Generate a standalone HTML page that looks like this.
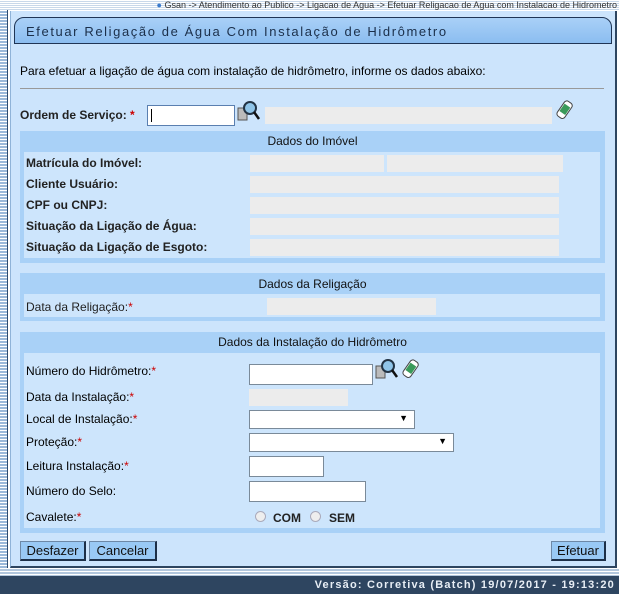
<!DOCTYPE html>
<html><head><meta charset="utf-8"><style>
*{box-sizing:border-box;margin:0;padding:0}
body{width:619px;height:594px;overflow:hidden;background:#fff;font-family:"Liberation Sans",Arial,sans-serif;font-size:12px;color:#000;position:relative}
.abs{position:absolute}
.crumb{top:0;left:0;width:619px;height:10px;background:repeating-linear-gradient(#fff 0 1px,#c8d8ea 1px 2px);font-size:9px;color:#333;text-align:right;line-height:10px;white-space:nowrap;padding-right:2px}
.strip{left:0;top:10px;width:8px;height:566px;background:repeating-linear-gradient(#fff 0 1px,#9bb9da 1px 3px);border-right:1px solid #2d4a6e}
.panel{left:10px;top:11px;width:607px;height:557px;background:#cce4fc;border-right:2px solid #2d4560;border-bottom:2px solid #2d4560;border-left:1px solid #8fb3d8}
.title{left:14px;top:17px;width:598px;height:27px;border:1px solid #1f3555;border-radius:10px 10px 0 0;background:linear-gradient(#a9d0f7,#8bbdf0);font-size:13px;letter-spacing:1.6px;color:#1b2f4a;padding:6px 0 0 11px}
.lbl{font-weight:bold;color:#222}
.req{color:#c00}
.inp{background:#fff;border:1px solid #7a8a99}
.ro{background:#ececec}
.sec{background:#a9d1f7}
.sech{text-align:center;color:#111}
.inner{background:#cde5fc}
.btn{background:#99c9f5;border:1px solid #6d88a6;border-right:2px solid #1c2f48;border-bottom:2px solid #1c2f48;font-size:13px;text-align:center;line-height:17px;color:#111}
.foot{left:0;top:576px;width:619px;height:18px;background:#2e4560;color:#e8eef5;font-size:11px;font-weight:bold;letter-spacing:1.2px;text-align:right;padding-right:4px;line-height:18px}
.stripe2{left:0;top:568px;width:619px;height:8px;background:repeating-linear-gradient(#fff 0 1px,#b3c7dd 1px 3px)}
.sel:after{content:"▼";position:absolute;right:6px;top:2px;font-size:9px}
.radio{width:11px;height:11px;border-radius:50%;border:1px solid #aab;background:#eee}
</style></head><body>
<div class="abs crumb"><span style="color:#3a7acc">●</span> Gsan -&gt; Atendimento ao Publico -&gt; Ligacao de Agua -&gt; Efetuar Religacao de Agua com Instalacao de Hidrometro</div>
<div class="abs strip"></div>
<div class="abs panel"></div>
<div class="abs title">Efetuar Religação de Água Com Instalação de Hidrômetro</div>
<div class="abs" style="left:20px;top:64px">Para efetuar a ligação de água com instalação de hidrômetro, informe os dados abaixo:</div>
<div class="abs" style="left:20px;top:88px;width:584px;height:1px;background:#999"></div>
<div class="abs lbl" style="left:20px;top:108px">Ordem de Serviço: <span class="req">*</span></div>
<div class="abs inp" style="left:147px;top:105px;width:88px;height:21px;border:1px solid #5a7fb0"><div style="width:1px;height:13px;background:#000;margin:3px 0 0 3px"></div></div>
<svg class="abs" style="left:237px;top:100px" width="24" height="22"><rect x="1" y="8" width="9" height="12" fill="#bbb" stroke="#555"/><circle cx="13" cy="8" r="6" fill="#8fc4e8" stroke="#234" stroke-width="2"/><line x1="17" y1="12" x2="22" y2="19" stroke="#111" stroke-width="2.5"/></svg>
<div class="abs ro" style="left:265px;top:107px;width:287px;height:17px"></div>
<svg class="abs" style="left:556px;top:99px" width="18" height="22"><g transform="rotate(35 9 11)"><rect x="4" y="2" width="9" height="18" rx="3" fill="#fff" stroke="#444"/><rect x="5" y="6" width="7" height="9" fill="#3a9a5a"/></g></svg>

<div class="abs sec" style="left:20px;top:131px;width:585px;height:132px"></div>
<div class="abs sech" style="left:20px;top:134px;width:585px">Dados do Imóvel</div>
<div class="abs inner" style="left:24px;top:152px;width:576px;height:106px"></div>
<div class="abs lbl" style="left:26px;top:156px">Matrícula do Imóvel:</div>
<div class="abs lbl" style="left:26px;top:177px">Cliente Usuário:</div>
<div class="abs lbl" style="left:26px;top:198px">CPF ou CNPJ:</div>
<div class="abs lbl" style="left:26px;top:219px">Situação da Ligação de Água:</div>
<div class="abs lbl" style="left:26px;top:240px">Situação da Ligação de Esgoto:</div>
<div class="abs ro" style="left:250px;top:155px;width:134px;height:17px"></div>
<div class="abs ro" style="left:387px;top:155px;width:176px;height:17px"></div>
<div class="abs ro" style="left:250px;top:176px;width:309px;height:17px"></div>
<div class="abs ro" style="left:250px;top:197px;width:309px;height:17px"></div>
<div class="abs ro" style="left:250px;top:218px;width:309px;height:17px"></div>
<div class="abs ro" style="left:250px;top:239px;width:309px;height:17px"></div>

<div class="abs sec" style="left:20px;top:273px;width:585px;height:48px"></div>
<div class="abs sech" style="left:20px;top:277px;width:585px">Dados da Religação</div>
<div class="abs inner" style="left:24px;top:294px;width:576px;height:23px"></div>
<div class="abs lbl" style="left:26px;top:300px;font-weight:normal">Data da Religação:<span class="req">*</span></div>
<div class="abs ro" style="left:267px;top:298px;width:169px;height:17px"></div>

<div class="abs sec" style="left:20px;top:332px;width:585px;height:201px"></div>
<div class="abs sech" style="left:20px;top:335px;width:585px">Dados da Instalação do Hidrômetro</div>
<div class="abs inner" style="left:24px;top:353px;width:576px;height:175px"></div>
<div class="abs" style="left:26px;top:364px">Número do Hidrômetro:<span class="req">*</span></div>
<div class="abs" style="left:26px;top:390px">Data da Instalação:<span class="req">*</span></div>
<div class="abs" style="left:26px;top:412px">Local de Instalação:<span class="req">*</span></div>
<div class="abs" style="left:26px;top:435px">Proteção:<span class="req">*</span></div>
<div class="abs" style="left:26px;top:459px">Leitura Instalação:<span class="req">*</span></div>
<div class="abs" style="left:26px;top:484px">Número do Selo:</div>
<div class="abs" style="left:26px;top:510px">Cavalete:<span class="req">*</span></div>
<div class="abs inp" style="left:249px;top:364px;width:124px;height:21px"></div>
<svg class="abs" style="left:375px;top:358px" width="24" height="22"><rect x="1" y="8" width="9" height="12" fill="#bbb" stroke="#555"/><circle cx="13" cy="8" r="6" fill="#8fc4e8" stroke="#234" stroke-width="2"/><line x1="17" y1="12" x2="22" y2="19" stroke="#111" stroke-width="2.5"/></svg>
<svg class="abs" style="left:402px;top:358px" width="18" height="22"><g transform="rotate(35 9 11)"><rect x="4" y="2" width="9" height="18" rx="3" fill="#fff" stroke="#444"/><rect x="5" y="6" width="7" height="9" fill="#3a9a5a"/></g></svg>
<div class="abs ro" style="left:249px;top:389px;width:99px;height:17px"></div>
<div class="abs inp sel" style="left:249px;top:410px;width:166px;height:19px"></div>
<div class="abs inp sel" style="left:249px;top:433px;width:205px;height:19px"></div>
<div class="abs inp" style="left:249px;top:456px;width:75px;height:21px"></div>
<div class="abs inp" style="left:249px;top:481px;width:117px;height:21px"></div>
<div class="abs radio" style="left:255px;top:511px"></div>
<div class="abs lbl" style="left:273px;top:511px">COM</div>
<div class="abs radio" style="left:310px;top:511px"></div>
<div class="abs lbl" style="left:329px;top:511px">SEM</div>

<div class="abs btn" style="left:20px;top:541px;width:66px;height:20px">Desfazer</div>
<div class="abs btn" style="left:89px;top:541px;width:68px;height:20px">Cancelar</div>
<div class="abs btn" style="left:551px;top:541px;width:55px;height:20px">Efetuar</div>

<div class="abs stripe2"></div>
<div class="abs foot">Versão: Corretiva (Batch) 19/07/2017 - 19:13:20</div>
</body></html>
